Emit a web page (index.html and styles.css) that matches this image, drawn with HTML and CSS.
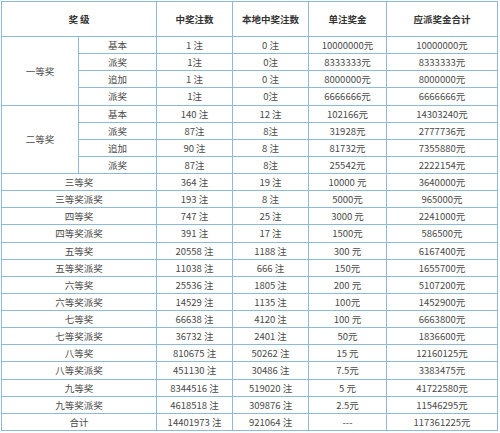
FILE: index.html
```html
<!DOCTYPE html>
<html lang="zh">
<head>
<meta charset="utf-8">
<link rel="stylesheet" href="styles.css">
</head>
<body>
<table class="prize">
<colgroup>
<col class="c1"><col class="c2"><col class="c3"><col class="c4"><col class="c5"><col class="c6">
</colgroup>
<thead>
<tr class="head"><th colspan="2">奖 级</th><th>中奖注数</th><th>本地中奖注数</th><th>单注奖金</th><th>应派奖金合计</th></tr>
</thead>
<tbody>
<tr><td rowspan="4">一等奖</td><td>基本</td><td>1 注</td><td>0 注</td><td>10000000元</td><td>10000000元</td></tr>
<tr><td>派奖</td><td>1注</td><td>0注</td><td>8333333元</td><td>8333333元</td></tr>
<tr><td>追加</td><td>1 注</td><td>0 注</td><td>8000000元</td><td>8000000元</td></tr>
<tr><td>派奖</td><td>1注</td><td>0注</td><td>6666666元</td><td>6666666元</td></tr>
<tr><td rowspan="4">二等奖</td><td>基本</td><td>140 注</td><td>12 注</td><td>102166元</td><td>14303240元</td></tr>
<tr><td>派奖</td><td>87注</td><td>8注</td><td>31928元</td><td>2777736元</td></tr>
<tr><td>追加</td><td>90 注</td><td>8 注</td><td>81732元</td><td>7355880元</td></tr>
<tr><td>派奖</td><td>87注</td><td>8注</td><td>25542元</td><td>2222154元</td></tr>
<tr><td colspan="2">三等奖</td><td>364 注</td><td>19 注</td><td>10000 元</td><td>3640000元</td></tr>
<tr><td colspan="2">三等奖派奖</td><td>193 注</td><td>8 注</td><td>5000元</td><td>965000元</td></tr>
<tr><td colspan="2">四等奖</td><td>747 注</td><td>25 注</td><td>3000 元</td><td>2241000元</td></tr>
<tr><td colspan="2">四等奖派奖</td><td>391 注</td><td>17 注</td><td>1500元</td><td>586500元</td></tr>
<tr><td colspan="2">五等奖</td><td>20558 注</td><td>1188 注</td><td>300 元</td><td>6167400元</td></tr>
<tr><td colspan="2">五等奖派奖</td><td>11038 注</td><td>666 注</td><td>150元</td><td>1655700元</td></tr>
<tr><td colspan="2">六等奖</td><td>25536 注</td><td>1805 注</td><td>200 元</td><td>5107200元</td></tr>
<tr><td colspan="2">六等奖派奖</td><td>14529 注</td><td>1135 注</td><td>100元</td><td>1452900元</td></tr>
<tr><td colspan="2">七等奖</td><td>66638 注</td><td>4120 注</td><td>100 元</td><td>6663800元</td></tr>
<tr><td colspan="2">七等奖派奖</td><td>36732 注</td><td>2401 注</td><td>50元</td><td>1836600元</td></tr>
<tr><td colspan="2">八等奖</td><td>810675 注</td><td>50262 注</td><td>15 元</td><td>12160125元</td></tr>
<tr><td colspan="2">八等奖派奖</td><td>451130 注</td><td>30486 注</td><td>7.5元</td><td>3383475元</td></tr>
<tr><td colspan="2">九等奖</td><td>8344516 注</td><td>519020 注</td><td>5 元</td><td>41722580元</td></tr>
<tr><td colspan="2">九等奖派奖</td><td>4618518 注</td><td>309876 注</td><td>2.5元</td><td>11546295元</td></tr>
<tr><td colspan="2">合计</td><td>14401973 注</td><td>921064 注</td><td>---</td><td>117361225元</td></tr>
</tbody>
</table>
</body>
</html>
```
FILE: styles.css
```css
html, body {
  margin: 0;
  padding: 0;
  background: #fff;
}
body {
  padding: 1px 0 0 1px;
  font-family: "Noto Sans CJK SC", "Microsoft YaHei", sans-serif;
}
.prize {
  border-collapse: collapse;
  table-layout: fixed;
  width: 496px;
  font-size: 9.5px;
  color: #4a4a4a;
}
.c1 { width: 77px; }
.c2 { width: 78px; }
.c3 { width: 76px; }
.c4 { width: 76px; }
.c5 { width: 78px; }
.c6 { width: 111px; }
.prize th, .prize td {
  border: 1px solid #8dbadb;
  padding: 0;
  text-align: center;
  vertical-align: middle;
  line-height: 14px;
  white-space: nowrap;
}
.prize th {
  font-weight: bold;
  color: #333;
}
.head { height: 35px; }
.prize tbody tr { height: 17.13px; }
```
